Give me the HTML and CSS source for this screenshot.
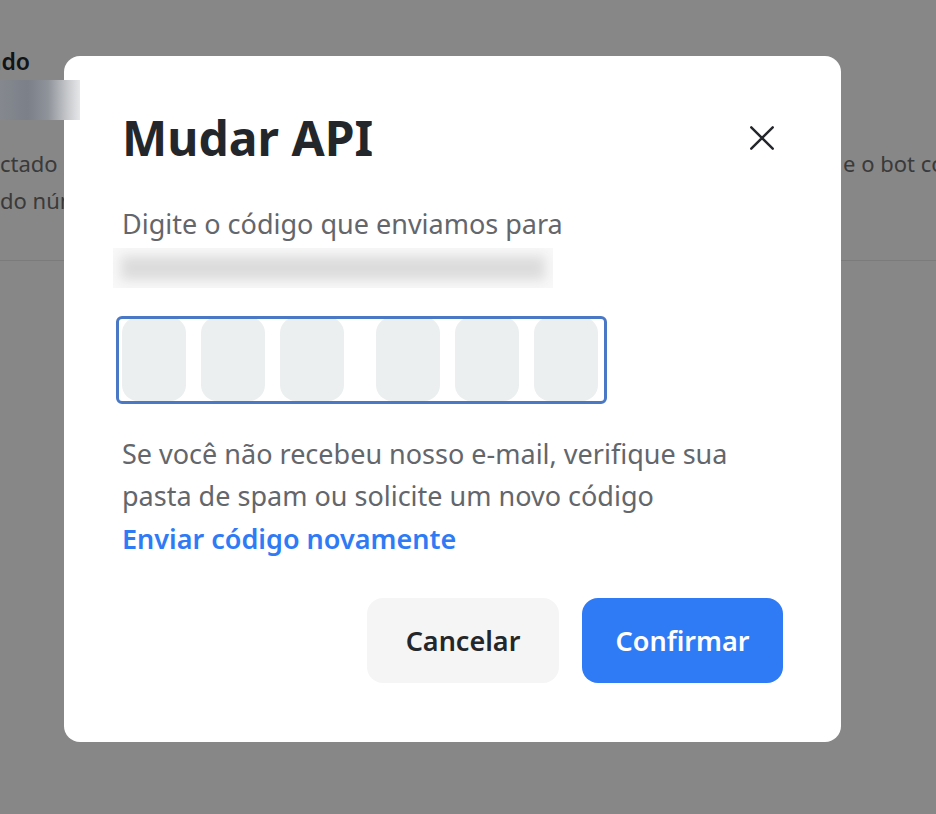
FILE: index.html
```html
<!DOCTYPE html>
<html lang="pt-BR">
<head>
  <meta charset="UTF-8">
  <title>Mudar API</title>
  <link rel="stylesheet" href="styles.css">
</head>
<body>
  <!-- página de fundo -->
  <div class="page">
    <div class="page-head">
      <h2 class="page-title">Status: conectado</h2>
    </div>
    <div class="page-section">
      <div class="bg-line">
        <span>ctado com sucesso. Agora você pode configurar</span>
        <span>e o bot continue respondendo</span>
      </div>
      <div class="bg-line">
        <span>do número cadastrado na sua conta</span>
      </div>
    </div>
  </div>
  <div class="redact"></div>

  <!-- modal -->
  <div class="overlay">
    <div class="modal">
      <div class="modal-head">
        <h1>Mudar API</h1>
        <button class="close" aria-label="Fechar">
          <svg width="28" height="28" viewBox="0 0 24 24" fill="none" stroke="#23272b" stroke-width="2.1" stroke-linecap="round">
            <path d="M2.8 2.8L21.2 21.2M21.2 2.8L2.8 21.2"/>
          </svg>
        </button>
      </div>
      <p class="desc">Digite o código que enviamos para</p>
      <div class="email-blur"></div>

      <div class="otp">
        <div class="otp-group">
          <input class="otp-cell" maxlength="1">
          <input class="otp-cell" maxlength="1">
          <input class="otp-cell" maxlength="1">
        </div>
        <div class="otp-group">
          <input class="otp-cell" maxlength="1">
          <input class="otp-cell" maxlength="1">
          <input class="otp-cell" maxlength="1">
        </div>
      </div>

      <p class="hint">Se você não recebeu nosso e-mail, verifique sua pasta de spam ou solicite um novo código</p>
      <a class="resend" href="#">Enviar código novamente</a>

      <div class="actions">
        <button class="btn btn-cancel">Cancelar</button>
        <button class="btn btn-confirm">Confirmar</button>
      </div>
    </div>
  </div>
</body>
</html>
```

FILE: styles.css
```css
/* 기본 */
html, body { margin: 0; padding: 0; }
body {
  width: 936px;
  height: 814px;
  overflow: hidden;
  background: #fff;
  color: #23272b;
  font-family: "Noto Sans", "Open Sans", sans-serif;
}
h1, h2, p { margin: 0; }

/* 뒤 페이지 */
.page { padding-top: 43px; }
.page-head { height: 36px; overflow: hidden; display: flex; justify-content: flex-end; width: 30px; }
.page-title { font-size: 23px; font-weight: 600; white-space: nowrap; line-height: 36px; color: #23272b; }
.page-section {
  margin-top: 66px;
  padding-bottom: 41px;
  border-bottom: 1px solid #e8e8e8;
}
.bg-line {
  display: grid;
  grid-template-columns: 843px auto;
  white-space: nowrap;
  overflow: hidden;
  font-size: 22px;
  line-height: 37px;
  color: #6e6e6e;
}
.bg-line span { overflow: hidden; }

.redact {
  position: absolute;
  left: 0;
  top: 80px;
  width: 80px;
  height: 40px;
  z-index: 20;
  background: linear-gradient(90deg, #85888e 0%, #7b8089 35%, #8f939a 60%, #c8cacd 85%, #e6e7e9 100%);
}

/* 오버레이 */
.overlay {
  position: fixed;
  inset: 0;
  background: rgba(0, 0, 0, .47);
  padding: 56px 0 0 64px;
  z-index: 10;
}
.modal {
  width: 777px;
  box-sizing: border-box;
  background: #fff;
  border-radius: 16px;
  padding: 50px 58px 59px;
}
.modal-head {
  display: flex;
  justify-content: space-between;
  align-items: center;
}
.modal-head h1 { font-size: 48px; font-weight: 700; line-height: 64px; color: #23272b; }
.close {
  border: 0;
  background: none;
  padding: 0;
  margin-right: 7px;
  width: 28px;
  height: 28px;
  cursor: pointer;
}

.desc { margin-top: 33px; font-size: 27px; line-height: 42px; color: #63666b; }
.email-blur {
  width: 440px;
  height: 40px;
  margin: 3px 0 0 -9px;
  background: #dcdcdc;
  box-shadow: inset 0 0 12px 8px #f8f8f8;
}

/* 코드 입력 */
.otp {
  display: flex;
  gap: 32px;
  width: 491px;
  height: 88px;
  box-sizing: border-box;
  margin: 28px 0 0 -6px;
  padding: 0 4px 0 3px;
  border: 3px solid #4a78c4;
  border-radius: 6px;
  overflow: hidden;
}
.otp-group { display: flex; gap: 15px; }
.otp-cell {
  width: 64px;
  height: 84px;
  margin-top: -2px;
  border: 0;
  padding: 0;
  border-radius: 16px;
  background: #eceff0;
  outline: none;
}

.hint { margin-top: 29px; font-size: 27px; line-height: 42px; color: #63666b; }
.resend {
  display: block;
  font-size: 27px;
  line-height: 43px;
  font-weight: 600;
  color: #2f7bf5;
  text-decoration: none;
}

/* 버튼 */
.actions {
  display: flex;
  justify-content: flex-end;
  gap: 23px;
  margin-top: 38px;
}
.btn {
  height: 85px;
  border: 0;
  border-radius: 16px;
  font-family: inherit;
  font-size: 27px;
  font-weight: 600;
  cursor: pointer;
}
.btn-cancel { width: 192px; background: #f5f5f5; color: #23272b; }
.btn-confirm { width: 201px; background: #2f7bf6; color: #fff; }
```
